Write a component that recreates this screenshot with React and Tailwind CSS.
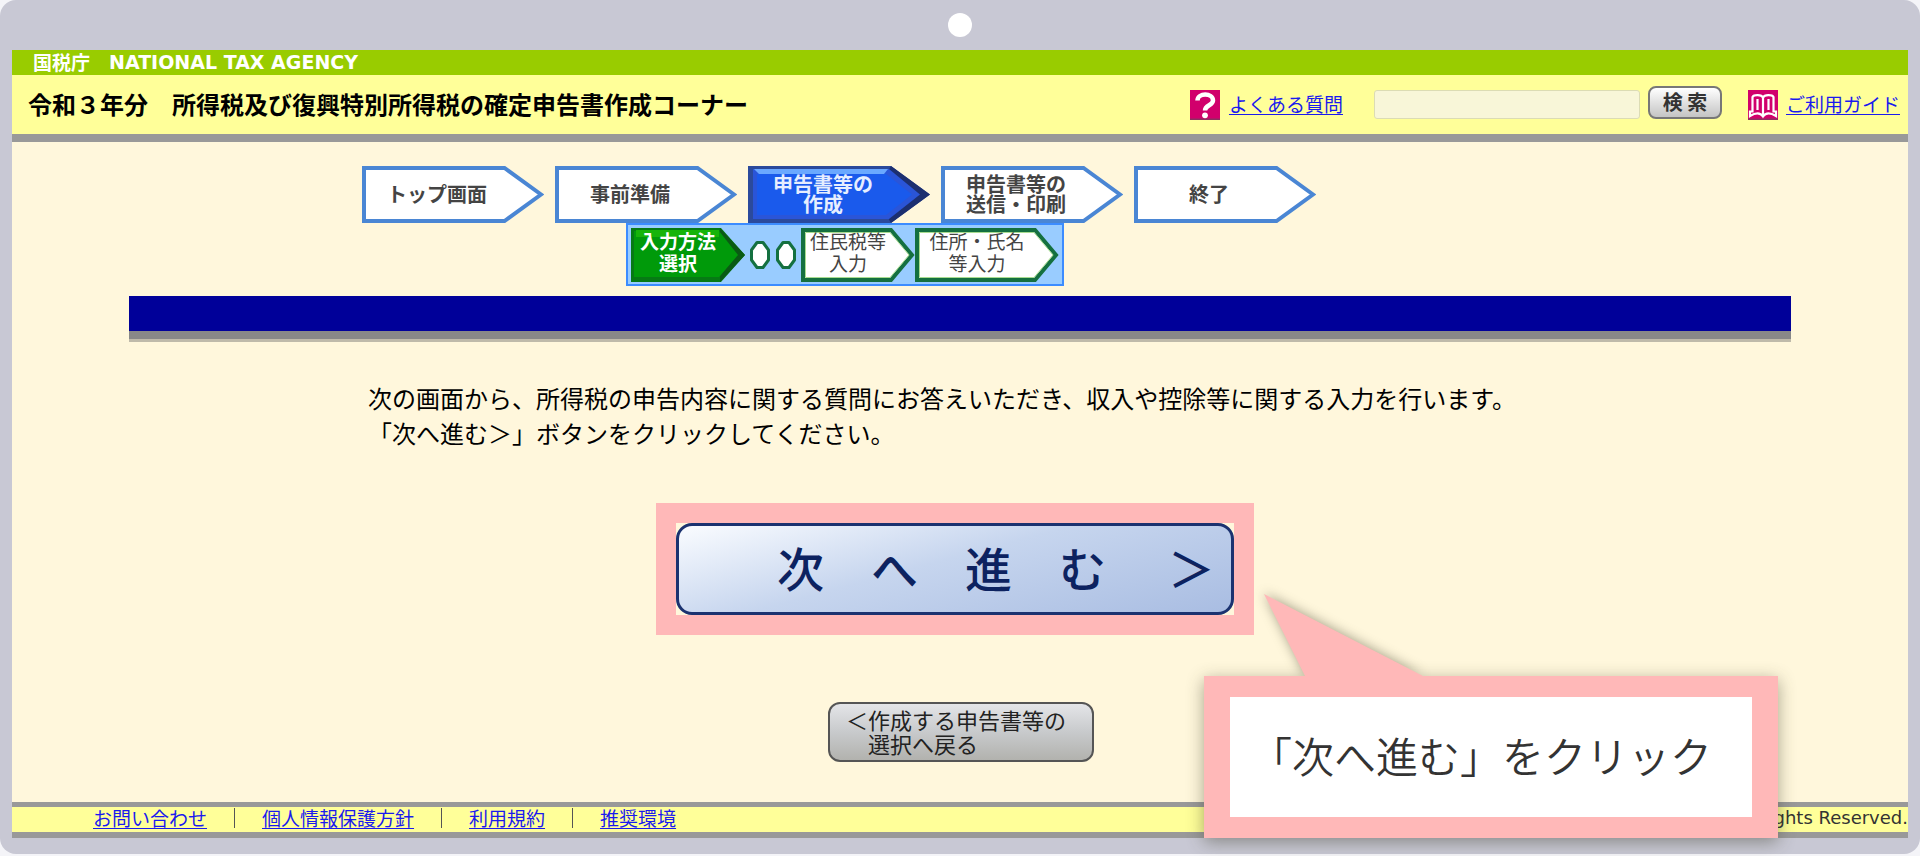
const ARROW_TEXT = "relative col-start-1 row-start-1 self-center text-center";

function StepArrow({ label, active }) {
  return (
    <li className="grid h-[57px] w-[182px] shrink-0" aria-current={active ? "step" : undefined}>
      <svg viewBox="0 0 182 57" className="col-start-1 row-start-1 h-full w-full" aria-hidden="true">
        {active ? (
          <>
            <path d="M0 0H143L182 28.500 143 57H0Z" fill="#2b4a9c" />
            <path d="M143 0 182 28.500 143 57 140 52 168 28.500 140 5Z" fill="#1c2f70" />
            <path d="M5 3H141L172 28.500 141 53H5Z" fill="#2a55d8" />
            <path d="M9 8H138L164 28.500 138 49H9Z" fill="#1a5aec" />
            <path d="M6 3H140L136 8H11Z" fill="#6aa8ff" />
          </>
        ) : (
          <path d="M2 2H142.500L179 28.500 142.500 55H2Z" fill="#fff" stroke="#4a86d4" strokeWidth="4" />
        )}
      </svg>
      <span
        className={`${ARROW_TEXT} whitespace-pre-line pr-8 pb-0.5 text-[20px] leading-5 font-bold ${active ? "text-[#e6eeff]" : "text-[#444]"}`}
      >
        {label}
      </span>
    </li>
  );
}

function SubArrow({ label, active, wide }) {
  const w = wide ? 144 : 114;
  const s = w - 24;
  return (
    <li className={`grid h-[54px] shrink-0 ${wide ? "w-[144px]" : "w-[114px]"}`} aria-current={active ? "step" : undefined}>
      <svg viewBox={`0 0 ${w} 54`} className="col-start-1 row-start-1 h-full w-full" aria-hidden="true">
        {active ? (
          <>
            <path d={`M0 0H${s}L${w} 27 ${s} 54H0Z`} fill="#067a14" />
            <path d={`M${s - 1} 0L${w} 27 ${s - 1} 54V48L${w - 8} 27 ${s - 1} 6Z`} fill="#0a5a14" />
            <path d={`M3 3H${s - 2}L${w - 7} 27 ${s - 2} 49H3Z`} fill="#009a0a" />
            <path d={`M5 2H${s - 2}V9H5Z`} fill="#16b40a" />
          </>
        ) : (
          <>
            <path d={`M2 2H${s}L${w - 3} 27 ${s} 52H2Z`} fill="#fff" stroke="#147040" strokeWidth="4" />
            <path d={`M4.500 4.500H${s - 1}L${w - 6} 27 ${s - 1} 49.500H4.500Z`} fill="none" stroke="#a8dc90" strokeWidth="1" />
          </>
        )}
      </svg>
      <span
        className={`${ARROW_TEXT} whitespace-pre-line pr-5 pb-1.5 text-[19px] leading-[22px] ${active ? "font-bold text-white" : "text-[#444]"}`}
      >
        {label}
      </span>
    </li>
  );
}

function Dot() {
  return (
    <li className="shrink-0" aria-hidden="true">
      <svg viewBox="0 0 22 30" className="h-[30px] w-[22px]">
        <path d="M8 2.500H14L19.500 10V20L14 27.500H8L2.500 20V10Z" fill="#fff" stroke="#147040" strokeWidth="3" strokeLinejoin="round" />
      </svg>
    </li>
  );
}

const LINK = "text-[19px] leading-6 text-[#1a1aee] underline underline-offset-2 whitespace-nowrap";

const FOOTER_LINKS = ["お問い合わせ", "個人情報保護方針", "利用規約", "推奨環境"];

export default function App() {
  return (
    <div className="flex min-h-screen flex-col bg-[#f4f4f8] pb-0.5 font-['Noto_Sans_CJK_JP',sans-serif] text-black">
      <div className="flex flex-1 flex-col rounded-2xl bg-[#c8c8d4] px-3 pb-4">
        <div className="flex h-[50px] items-center justify-center">
          <span className="h-6 w-6 rounded-full bg-white" />
        </div>

        <div className="relative flex flex-1 flex-col bg-[#fff7dc]">
          <header>
            <div className="flex h-[25px] items-center gap-[19px] bg-[#99cc00] pb-0.5 pl-[21px] font-bold text-white">
              <span className="text-[19px] leading-6">国税庁</span>
              <span className="font-['DejaVu_Sans',sans-serif] text-[19px] leading-6">NATIONAL TAX AGENCY</span>
            </div>
            <div className="flex h-[67px] items-center border-b-8 border-[#999] bg-[#ffff99] pr-2 pl-4">
              <h1 className="pb-0.5 text-[24px] leading-8 font-bold whitespace-nowrap">
                令和３年分　所得税及び復興特別所得税の確定申告書作成コーナー
              </h1>
              <div className="ml-auto flex items-center">
                <svg viewBox="0 0 30 30" className="h-[30px] w-[30px]" aria-hidden="true">
                  <path d="M0 0H30V30H0Z" fill="#d1006c" />
                  <path d="M0 28.500H30V30H0Z" fill="#8a3060" />
                  <path d="M7.500 10.500C7.500 2.500 23 2.500 23 10.500 23 15.500 15 15 15 20.500" fill="none" stroke="#fff" strokeWidth="4.500" />
                  <circle cx="15" cy="25.300" r="2.900" fill="#fff" />
                </svg>
                <a href="#faq" className={`${LINK} ml-[9px] pb-0.5`}>よくある質問</a>
                <form className="ml-[31px] flex items-center gap-2" onSubmit={(e) => e.preventDefault()}>
                  <input
                    type="text"
                    aria-label="検索"
                    className="h-[29px] w-[266px] rounded-[3px] border border-[#dcdcb4] bg-[#f8f6d8] px-2 text-base"
                  />
                  <button
                    type="submit"
                    className="mb-1 h-[33px] w-[74px] rounded-lg border-2 border-[#777] bg-linear-to-b from-white to-[#c4c4c4] pb-0.5 text-[20px] leading-6 font-bold text-[#333]"
                  >
                    検 索
                  </button>
                </form>
                <svg viewBox="0 0 30 30" className="ml-[26px] h-[30px] w-[30px]" aria-hidden="true">
                  <path d="M0 0H30V30H0Z" fill="#d1006c" />
                  <path d="M0 28.500H30V30H0Z" fill="#8a3060" />
                  <path
                    d="M15 7.500C13.500 4.500 6 4.500 4.500 7V21.500H2V26C7 23 12 22 15 26.500 18 22 23 23 28 26V21.500H25.500V7C24 4.500 16.500 4.500 15 7.500ZM15 8V25M9.500 9V20M20.500 9V20"
                    fill="none"
                    stroke="#fff"
                    strokeWidth="2.200"
                  />
                </svg>
                <a href="#guide" className={`${LINK} ml-2 pb-0.5`}>ご利用ガイド</a>
              </div>
            </div>
          </header>

          <main className="flex flex-1 flex-col pt-6">
            <nav className="mx-auto w-full max-w-[1196px]" aria-label="作成の流れ">
              <ol className="flex gap-[11px]">
                <StepArrow label="トップ画面" />
                <StepArrow label="事前準備" />
                <StepArrow label={"申告書等の\n作成"} active />
                <StepArrow label={"申告書等の\n送信・印刷"} />
                <StepArrow label="終了" />
              </ol>
              <ol className="ml-[264px] flex h-[63px] w-[438px] items-center border-2 border-[#3c8cff] bg-[#99ccff] pl-[3px]">
                <SubArrow label={"入力方法\n選択"} active />
                <li className="px-1" aria-hidden="true">
                  <ul className="flex gap-1">
                    <Dot />
                    <Dot />
                  </ul>
                </li>
                <SubArrow label={"住民税等\n入力"} />
                <SubArrow label={"住所・氏名\n等入力"} wide />
              </ol>
            </nav>

            <div className="mx-[117px] mt-[10px] h-[43px] border-b-8 border-[#888] bg-[#000099] shadow-[0_3px_0_#bfbaaa]" />

            <div className="mx-auto mt-[41px] w-full max-w-[1184px] text-[24px] leading-[35px]">
              <p>次の画面から、所得税の申告内容に関する質問にお答えいただき、収入や控除等に関する入力を行います。</p>
              <p>「次へ進む＞」ボタンをクリックしてください。</p>
            </div>

            <div className="mt-[53px] mr-2.5 self-center bg-[#ffb8b8] p-5">
              <div className="bg-[#fff7dc]">
                <button
                  type="button"
                  className="flex h-[92px] w-[558px] items-center justify-between rounded-2xl border-3 border-[#1b3270] bg-linear-165 from-[#fafcff] via-[#c6d5ee] via-45% to-[#a9bde2] pr-4 pb-1 pl-[98px] text-[47px] font-medium text-[#0c2260]"
                >
                  <span>次　へ　進　む</span>
                  <span>＞</span>
                </button>
              </div>
            </div>

            <button
              type="button"
              className="mt-[67px] mb-10 ml-0.5 h-[60px] w-[266px] self-center rounded-xl border-2 border-[#555] bg-linear-to-b from-[#e4e5e8] via-[#c8cacc] to-[#b2b2ae] pb-0.5 pl-4 text-left text-[22px] leading-6 whitespace-nowrap text-[#222]"
            >
              <span className="block">＜作成する申告書等の</span>
              <span className="block pl-[22px]">選択へ戻る</span>
            </button>
          </main>

          <footer className="flex h-9 items-center border-t-5 border-b-6 border-[#999] bg-[#ffff99] pb-1 pl-[81px]">
            {FOOTER_LINKS.map((label, i) => (
              <span key={label} className="flex items-center">
                {i > 0 && <span className="mx-[27px] h-5 w-px bg-[#555]" />}
                <a href="#footer" className={LINK}>{label}</a>
              </span>
            ))}
            <small className="ml-auto font-['DejaVu_Sans',sans-serif] text-[18px] leading-6 text-[#333]">
              All Rights Reserved.
            </small>
          </footer>

          <aside className="absolute right-[130px] bottom-0 w-[574px] bg-[#ffb8b8] px-[26px] py-[21px] shadow-[0_4px_16px_rgba(60,60,40,0.45)]">
            <svg
              viewBox="0 0 160 84"
              className="absolute bottom-full left-[60px] h-[82px] w-[160px] drop-shadow-[0_-1px_6px_rgba(60,60,40,0.45)] [clip-path:inset(-20px_-20px_0_-20px)]"
              preserveAspectRatio="none"
              aria-hidden="true"
            >
              <path d="M0 0 159 84H41Z" fill="#ffb8b8" />
            </svg>
            <p className="bg-white pb-1 pl-5 text-[42px] leading-[116px] font-[350] whitespace-nowrap text-[#333]">
              「次へ進む」をクリック
            </p>
          </aside>
        </div>
      </div>
    </div>
  );
}
